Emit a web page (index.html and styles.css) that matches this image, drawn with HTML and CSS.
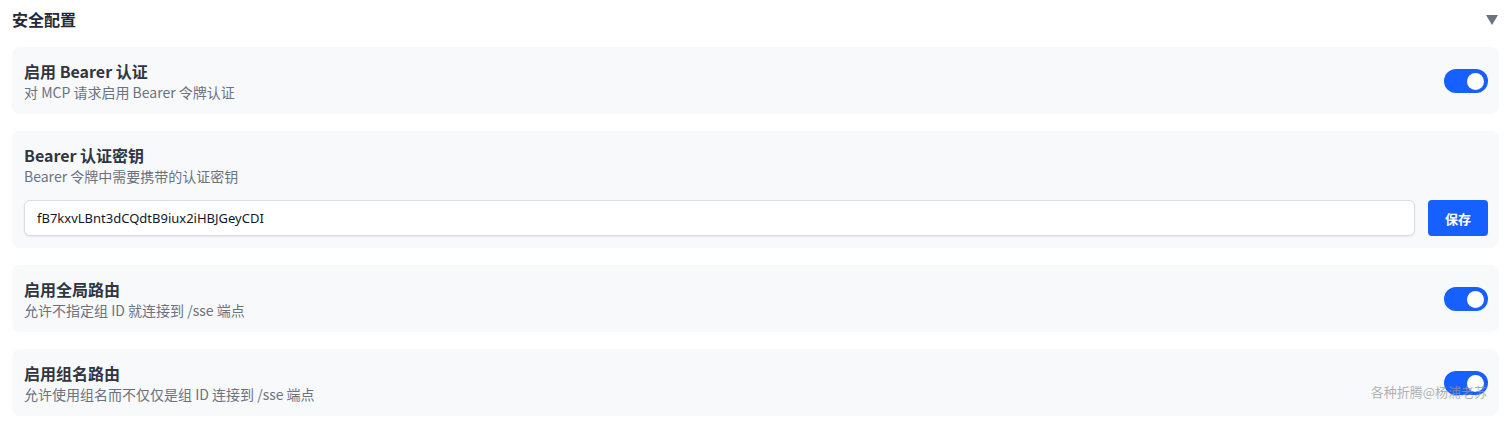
FILE: index.html
```html
<!DOCTYPE html>
<html lang="zh-CN">
<head>
<meta charset="utf-8">
<title>安全配置</title>
<link rel="stylesheet" href="styles.css">
</head>
<body>
<div class="page">
  <div class="section-head">
    <h2 class="section-title">安全配置</h2>
    <span class="caret"></span>
  </div>
  <div class="card row">
    <div class="info">
      <div class="title">启用 Bearer 认证</div>
      <div class="desc">对 MCP 请求启用 Bearer 令牌认证</div>
    </div>
    <span class="switch"><span class="knob"></span></span>
  </div>
  <div class="card">
    <div class="title">Bearer 认证密钥</div>
    <div class="desc">Bearer 令牌中需要携带的认证密钥</div>
    <div class="key-row">
      <input class="key-input" type="text" value="fB7kxvLBnt3dCQdtB9iux2iHBJGeyCDI">
      <button class="btn">保存</button>
    </div>
  </div>
  <div class="card row">
    <div class="info">
      <div class="title">启用全局路由</div>
      <div class="desc">允许不指定组 ID 就连接到 /sse 端点</div>
    </div>
    <span class="switch"><span class="knob"></span></span>
  </div>
  <div class="card row">
    <div class="info">
      <div class="title">启用组名路由</div>
      <div class="desc">允许使用组名而不仅仅是组 ID 连接到 /sse 端点</div>
    </div>
    <span class="switch"><span class="knob"></span></span>
  </div>
  <div class="watermark">各种折腾@杨浦老苏</div>
</div>
</body>
</html>
```
FILE: styles.css
```css
* { box-sizing: border-box; }
html, body { margin: 0; padding: 0; background: #fff; }
body {
  font-family: "Noto Sans CJK SC", "Noto Sans", sans-serif;
  color: #1f2937;
}
.page {
  position: relative;
  padding: 7px 10px 0 12px;
  display: flex;
  flex-direction: column;
  gap: 17px;
  height: 421px;
}
.section-head {
  display: flex;
  align-items: center;
  justify-content: space-between;
  height: 24px;
  margin-bottom: -1px;
}
.section-title {
  margin: 0;
  font-size: 16px;
  line-height: 24px;
  font-weight: 700;
  color: #1f2937;
}
.caret {
  width: 0; height: 0;
  border-left: 6px solid transparent;
  border-right: 6px solid transparent;
  border-top: 10px solid #6b7280;
  margin-right: 1px;
  margin-top: 1px;
}
.card {
  background: #f8f9fb;
  border-radius: 8px;
  padding: 12px 11px 12px 12px;
}
.row {
  display: flex;
  align-items: center;
  justify-content: space-between;
  min-height: 67px;
}
.title {
  font-size: 16px;
  line-height: 24px;
  font-weight: 600;
  color: #303540;
}
.desc {
  font-size: 14px;
  line-height: 19px;
  color: #6b7280;
}
.switch {
  position: relative;
  width: 44px;
  height: 24px;
  border-radius: 12px;
  background: #1660ff;
  display: flex;
  align-items: center;
  justify-content: flex-end;
  padding: 0 4px;
  margin-top: 1px;
}
.knob {
  width: 17px; height: 17px;
  border-radius: 50%;
  background: #fff;
}
.key-row {
  display: flex;
  gap: 13px;
  margin-top: 14px;
}
.key-input {
  flex: 1;
  height: 36px;
  border: 1px solid #d9dce3;
  border-radius: 6px;
  background: #fff;
  padding: 0 12px;
  font-family: "Noto Sans", sans-serif;
  font-size: 13px;
  color: #111827;
  box-shadow: 0 1px 2px rgba(0,0,0,0.08);
  outline: none;
}
.btn {
  width: 60px;
  height: 36px;
  border: none;
  border-radius: 4px;
  background: #1660ff;
  color: #fff;
  font-family: "Noto Sans CJK SC", sans-serif;
  font-size: 13px;
  font-weight: 700;
}
.watermark {
  position: absolute;
  right: 22px;
  top: 382px;
  font-family: "Noto Sans CJK SC", sans-serif;
  font-size: 13px;
  line-height: 20px;
  color: rgba(150,150,150,0.75);
}
```
